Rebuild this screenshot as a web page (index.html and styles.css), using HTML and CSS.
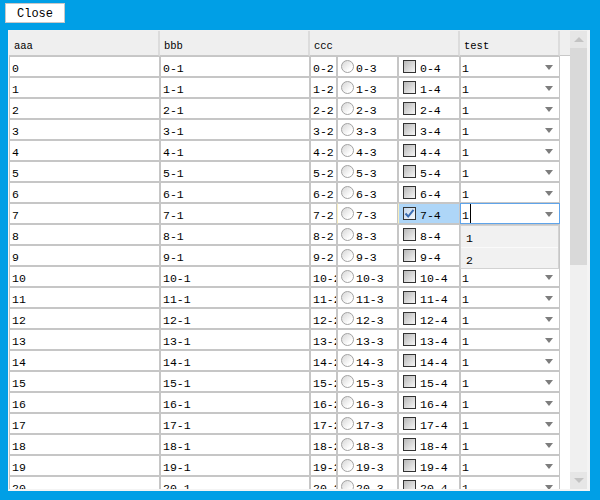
FILE: index.html
```html
<!DOCTYPE html>
<html>
<head>
<meta charset="utf-8">
<link rel="stylesheet" href="styles.css">
</head>
<body>
<div class="toolbar"><button class="close-btn">Close</button></div>
<div class="grid">
  <div class="content">
    <table class="data">
      <colgroup>
        <col class="c-aaa"><col class="c-bbb"><col class="c-ccc"><col class="c-rad"><col class="c-chk"><col class="c-test"><col class="c-fill">
      </colgroup>
      <thead>
        <tr><th>aaa</th><th>bbb</th><th colspan="3">ccc</th><th>test</th><th class="th-fill"></th></tr>
      </thead>
      <tbody>
        <tr><td>0</td><td>0-1</td><td>0-2</td><td class="rad"><div class="opt"><span class="radio"></span><span class="lbl">0-3</span></div></td><td class="chk"><div class="opt"><span class="box"></span><span class="lbl">0-4</span></div></td><td class="test"><div class="combo"><span class="lbl">1</span><span class="arrow"></span></div></td><td class="fill"></td></tr>
        <tr><td>1</td><td>1-1</td><td>1-2</td><td class="rad"><div class="opt"><span class="radio"></span><span class="lbl">1-3</span></div></td><td class="chk"><div class="opt"><span class="box"></span><span class="lbl">1-4</span></div></td><td class="test"><div class="combo"><span class="lbl">1</span><span class="arrow"></span></div></td><td class="fill"></td></tr>
        <tr><td>2</td><td>2-1</td><td>2-2</td><td class="rad"><div class="opt"><span class="radio"></span><span class="lbl">2-3</span></div></td><td class="chk"><div class="opt"><span class="box"></span><span class="lbl">2-4</span></div></td><td class="test"><div class="combo"><span class="lbl">1</span><span class="arrow"></span></div></td><td class="fill"></td></tr>
        <tr><td>3</td><td>3-1</td><td>3-2</td><td class="rad"><div class="opt"><span class="radio"></span><span class="lbl">3-3</span></div></td><td class="chk"><div class="opt"><span class="box"></span><span class="lbl">3-4</span></div></td><td class="test"><div class="combo"><span class="lbl">1</span><span class="arrow"></span></div></td><td class="fill"></td></tr>
        <tr><td>4</td><td>4-1</td><td>4-2</td><td class="rad"><div class="opt"><span class="radio"></span><span class="lbl">4-3</span></div></td><td class="chk"><div class="opt"><span class="box"></span><span class="lbl">4-4</span></div></td><td class="test"><div class="combo"><span class="lbl">1</span><span class="arrow"></span></div></td><td class="fill"></td></tr>
        <tr><td>5</td><td>5-1</td><td>5-2</td><td class="rad"><div class="opt"><span class="radio"></span><span class="lbl">5-3</span></div></td><td class="chk"><div class="opt"><span class="box"></span><span class="lbl">5-4</span></div></td><td class="test"><div class="combo"><span class="lbl">1</span><span class="arrow"></span></div></td><td class="fill"></td></tr>
        <tr><td>6</td><td>6-1</td><td>6-2</td><td class="rad"><div class="opt"><span class="radio"></span><span class="lbl">6-3</span></div></td><td class="chk"><div class="opt"><span class="box"></span><span class="lbl">6-4</span></div></td><td class="test"><div class="combo"><span class="lbl">1</span><span class="arrow"></span></div></td><td class="fill"></td></tr>
        <tr class="current"><td>7</td><td>7-1</td><td>7-2</td><td class="rad"><div class="opt"><span class="radio"></span><span class="lbl">7-3</span></div></td><td class="chk active"><div class="opt"><span class="box checked"><svg width="11" height="11" viewBox="0 0 11 11"><path d="M1.5 5.5 L4.2 8.5 L9.5 1.8" fill="none" stroke="#3b6db3" stroke-width="2"/></svg></span><span class="lbl">7-4</span></div></td><td class="test editing"><div class="combo"><span class="lbl caret">1</span><span class="arrow"></span></div></td><td class="fill"></td></tr>
        <tr><td>8</td><td>8-1</td><td>8-2</td><td class="rad"><div class="opt"><span class="radio"></span><span class="lbl">8-3</span></div></td><td class="chk"><div class="opt"><span class="box"></span><span class="lbl">8-4</span></div></td><td class="test"><div class="combo"><span class="lbl">1</span><span class="arrow"></span></div></td><td class="fill"></td></tr>
        <tr><td>9</td><td>9-1</td><td>9-2</td><td class="rad"><div class="opt"><span class="radio"></span><span class="lbl">9-3</span></div></td><td class="chk"><div class="opt"><span class="box"></span><span class="lbl">9-4</span></div></td><td class="test"><div class="combo"><span class="lbl">1</span><span class="arrow"></span></div></td><td class="fill"></td></tr>
        <tr><td>10</td><td>10-1</td><td>10-2</td><td class="rad"><div class="opt"><span class="radio"></span><span class="lbl">10-3</span></div></td><td class="chk"><div class="opt"><span class="box"></span><span class="lbl">10-4</span></div></td><td class="test"><div class="combo"><span class="lbl">1</span><span class="arrow"></span></div></td><td class="fill"></td></tr>
        <tr><td>11</td><td>11-1</td><td>11-2</td><td class="rad"><div class="opt"><span class="radio"></span><span class="lbl">11-3</span></div></td><td class="chk"><div class="opt"><span class="box"></span><span class="lbl">11-4</span></div></td><td class="test"><div class="combo"><span class="lbl">1</span><span class="arrow"></span></div></td><td class="fill"></td></tr>
        <tr><td>12</td><td>12-1</td><td>12-2</td><td class="rad"><div class="opt"><span class="radio"></span><span class="lbl">12-3</span></div></td><td class="chk"><div class="opt"><span class="box"></span><span class="lbl">12-4</span></div></td><td class="test"><div class="combo"><span class="lbl">1</span><span class="arrow"></span></div></td><td class="fill"></td></tr>
        <tr><td>13</td><td>13-1</td><td>13-2</td><td class="rad"><div class="opt"><span class="radio"></span><span class="lbl">13-3</span></div></td><td class="chk"><div class="opt"><span class="box"></span><span class="lbl">13-4</span></div></td><td class="test"><div class="combo"><span class="lbl">1</span><span class="arrow"></span></div></td><td class="fill"></td></tr>
        <tr><td>14</td><td>14-1</td><td>14-2</td><td class="rad"><div class="opt"><span class="radio"></span><span class="lbl">14-3</span></div></td><td class="chk"><div class="opt"><span class="box"></span><span class="lbl">14-4</span></div></td><td class="test"><div class="combo"><span class="lbl">1</span><span class="arrow"></span></div></td><td class="fill"></td></tr>
        <tr><td>15</td><td>15-1</td><td>15-2</td><td class="rad"><div class="opt"><span class="radio"></span><span class="lbl">15-3</span></div></td><td class="chk"><div class="opt"><span class="box"></span><span class="lbl">15-4</span></div></td><td class="test"><div class="combo"><span class="lbl">1</span><span class="arrow"></span></div></td><td class="fill"></td></tr>
        <tr><td>16</td><td>16-1</td><td>16-2</td><td class="rad"><div class="opt"><span class="radio"></span><span class="lbl">16-3</span></div></td><td class="chk"><div class="opt"><span class="box"></span><span class="lbl">16-4</span></div></td><td class="test"><div class="combo"><span class="lbl">1</span><span class="arrow"></span></div></td><td class="fill"></td></tr>
        <tr><td>17</td><td>17-1</td><td>17-2</td><td class="rad"><div class="opt"><span class="radio"></span><span class="lbl">17-3</span></div></td><td class="chk"><div class="opt"><span class="box"></span><span class="lbl">17-4</span></div></td><td class="test"><div class="combo"><span class="lbl">1</span><span class="arrow"></span></div></td><td class="fill"></td></tr>
        <tr><td>18</td><td>18-1</td><td>18-2</td><td class="rad"><div class="opt"><span class="radio"></span><span class="lbl">18-3</span></div></td><td class="chk"><div class="opt"><span class="box"></span><span class="lbl">18-4</span></div></td><td class="test"><div class="combo"><span class="lbl">1</span><span class="arrow"></span></div></td><td class="fill"></td></tr>
        <tr><td>19</td><td>19-1</td><td>19-2</td><td class="rad"><div class="opt"><span class="radio"></span><span class="lbl">19-3</span></div></td><td class="chk"><div class="opt"><span class="box"></span><span class="lbl">19-4</span></div></td><td class="test"><div class="combo"><span class="lbl">1</span><span class="arrow"></span></div></td><td class="fill"></td></tr>
        <tr><td>20</td><td>20-1</td><td>20-2</td><td class="rad"><div class="opt"><span class="radio"></span><span class="lbl">20-3</span></div></td><td class="chk"><div class="opt"><span class="box"></span><span class="lbl">20-4</span></div></td><td class="test"><div class="combo"><span class="lbl">1</span><span class="arrow"></span></div></td><td class="fill"></td></tr>
      </tbody>
    </table>
    <div class="dropdown">
      <div class="dd-item">1</div>
      <div class="dd-item">2</div>
    </div>
  </div>
  <div class="scrollbar">
    <div class="sb-btn"><span class="up"></span></div>
    <div class="sb-thumb"></div>
    <div class="sb-track"></div>
    <div class="sb-btn"><span class="down"></span></div>
  </div>
</div>
</body>
</html>
```
FILE: styles.css
```css
* { box-sizing: border-box; }
body {
  margin: 0;
  background: #009fe6;
  font-family: "Liberation Mono", "DejaVu Sans Mono", monospace;
  color: #000;
}
.toolbar {
  height: 30px;
  padding: 3px 0 0 5px;
}
.close-btn {
  width: 60px;
  height: 20px;
  background: #fff;
  border: 1px solid #c8c8c8;
  font-family: "Liberation Mono", monospace;
  font-size: 12px;
  padding: 1px 0 0;
  color: #000;
}
.grid {
  margin-left: 8px;
  width: 582px;
  height: 461px;
  display: flex;
  border-top: 1px solid #f0f0f0;
  border-left: 1px solid #f4f4f4;
  border-right: 3px solid #f4f4f4;
  border-bottom: 2px solid #f4f4f4;
  background: #fff;
}
.content {
  width: 561px;
  height: 458px;
  overflow: hidden;
  position: relative;
  background: #fff;
  flex: none;
}
.data {
  border-collapse: separate;
  border-spacing: 0;
  table-layout: fixed;
  width: 561px;
}
.c-aaa { width: 151px; }
.c-bbb { width: 150px; }
.c-ccc { width: 27px; }
.c-rad { width: 61px; }
.c-chk { width: 62px; }
.c-test { width: 100px; }
.c-fill { width: 10px; }
th {
  height: 25px;
  background: #efefef;
  border-bottom: 1px solid #c8c8c8;
  border-right: 2px solid #dcdcdc;
  text-align: left;
  font-weight: normal;
  font-size: 10.5px;
  padding: 5px 0 0 4px;
  line-height: 18px;
  white-space: nowrap;
  overflow: hidden;
}
th:first-child { padding-left: 5px; }
th.th-fill { border-right: none; padding: 0; }
td {
  height: 21px;
  border: 1px solid #c6c6c6;
  padding: 4px 0 0 2px;
  line-height: 15px;
  font-size: 11.5px;
  white-space: nowrap;
  overflow: hidden;
  background: #fff;
}
td.fill { border: none; padding: 0; }
td.rad { padding: 0 0 0 3px; }
td.chk { padding: 0 0 0 4px; }
td.test { padding: 0 6px 0 1px; }
.opt {
  display: flex;
  align-items: center;
  height: 19px;
}
.lbl {
  display: inline-block;
  padding-top: 4px;
  line-height: 15px;
}
.radio {
  width: 13px;
  height: 13px;
  border-radius: 50%;
  border: 1px solid #a2a2a2;
  background: linear-gradient(135deg, #d6d6d6, #ffffff 75%);
  margin-right: 2px;
  flex: none;
}
.box {
  width: 13px;
  height: 13px;
  border: 1px solid #333;
  background: linear-gradient(135deg, #b8b8b8, #f6f6f6);
  margin-right: 4px;
  flex: none;
  display: flex;
  align-items: center;
  justify-content: center;
}
.box.checked { background: linear-gradient(135deg, #c4d6ea, #f6f9fc); }
.combo {
  display: flex;
  align-items: center;
  justify-content: space-between;
  height: 19px;
}
.arrow {
  width: 0;
  height: 0;
  border-left: 4.5px solid transparent;
  border-right: 4.5px solid transparent;
  border-top: 5px solid #7d7d7d;
  margin-top: 2px;
}
.current td.rad { border-left-color: #f6ecbc; }
.current td.chk { border-left-color: #f6ecbc; }
td.chk.active { background: #aed6f8; }
td.test.editing { border-color: #5fa4ea; }
.caret {
  padding-right: 1px;
  border-right: 1px solid #000;
  margin-top: 0;
}
.dropdown {
  position: absolute;
  left: 451px;
  top: 194px;
  width: 99px;
  height: 44px;
  background: #f1f1f1;
  border: 1px solid #d2d2d2;
}
.dd-item {
  height: 21px;
  line-height: 15px;
  padding: 5px 0 0 5px;
  font-size: 11.5px;
}
.dd-item + .dd-item { border-top: 1px solid #fafafa; }
.scrollbar {
  width: 17px;
  height: 458px;
  display: flex;
  flex-direction: column;
  background: #f0f0f0;
  flex: none;
}
.sb-btn {
  height: 17px;
  background: #e6e6e6;
  display: flex;
  align-items: center;
  justify-content: center;
  flex: none;
}
.sb-thumb {
  height: 217px;
  background: #d9d9d9;
  flex: none;
}
.sb-track { flex: 1; background: #f0f0f0; }
.up {
  width: 0; height: 0;
  border-left: 5px solid transparent;
  border-right: 5px solid transparent;
  border-bottom: 5px solid #c3c3c3;
}
.down {
  width: 0; height: 0;
  border-left: 5px solid transparent;
  border-right: 5px solid transparent;
  border-top: 5px solid #c3c3c3;
}
```
